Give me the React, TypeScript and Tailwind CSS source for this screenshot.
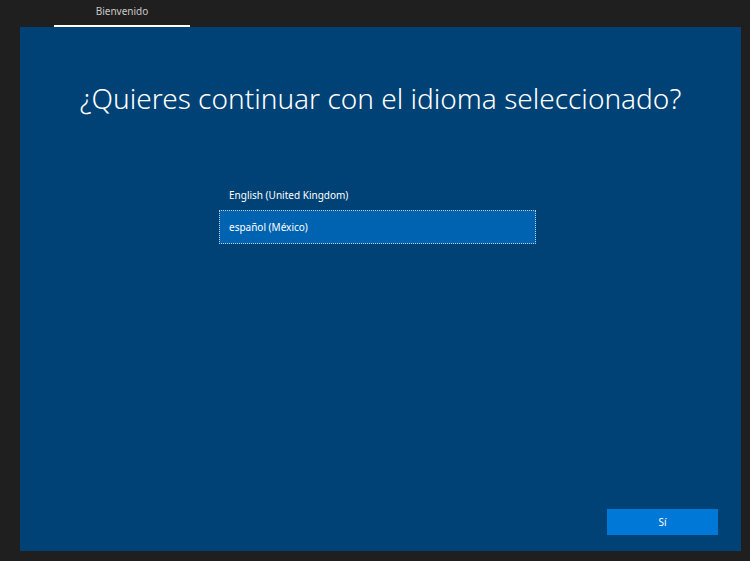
export default function App() {
  return (
    <div className="w-[750px] h-[561px] bg-[#1f1f1f] flex flex-col" style={{ fontFamily: '"Noto Sans", "Open Sans", sans-serif' }}>
      <div className="h-[27px] flex pl-[54px]">
        <div className="w-[136px] flex flex-col items-center">
          <span className="text-[10px] text-[#c8c8c8] mt-[6px] leading-none">Bienvenido</span>
          <div className="mt-auto h-[2px] w-full bg-white" />
        </div>
      </div>
      <div className="ml-[20px] w-[721px] h-[524px] bg-[#004275] flex flex-col">
        <h1 className="text-center text-white font-light text-[28px] mt-[53px] leading-[36px]">¿Quieres continuar con el idioma seleccionado?</h1>
        <div className="ml-[199px] w-[317px] mt-[64px] flex flex-col">
          <div className="h-[30px] flex items-center pl-[10px] text-[10px] text-white">English (United Kingdom)</div>
          <div className="h-[34px] flex items-center pl-[9px] text-[10px] text-white bg-[#0063b1] border border-dotted border-[#b8cde0]">español (México)</div>
        </div>
        <div className="mt-auto mb-[16px] flex justify-end pr-[23px]">
          <div className="w-[111px] h-[26px] bg-[#0078d7] text-white text-[10px] flex items-center justify-center">Sí</div>
        </div>
      </div>
    </div>
  );
}
